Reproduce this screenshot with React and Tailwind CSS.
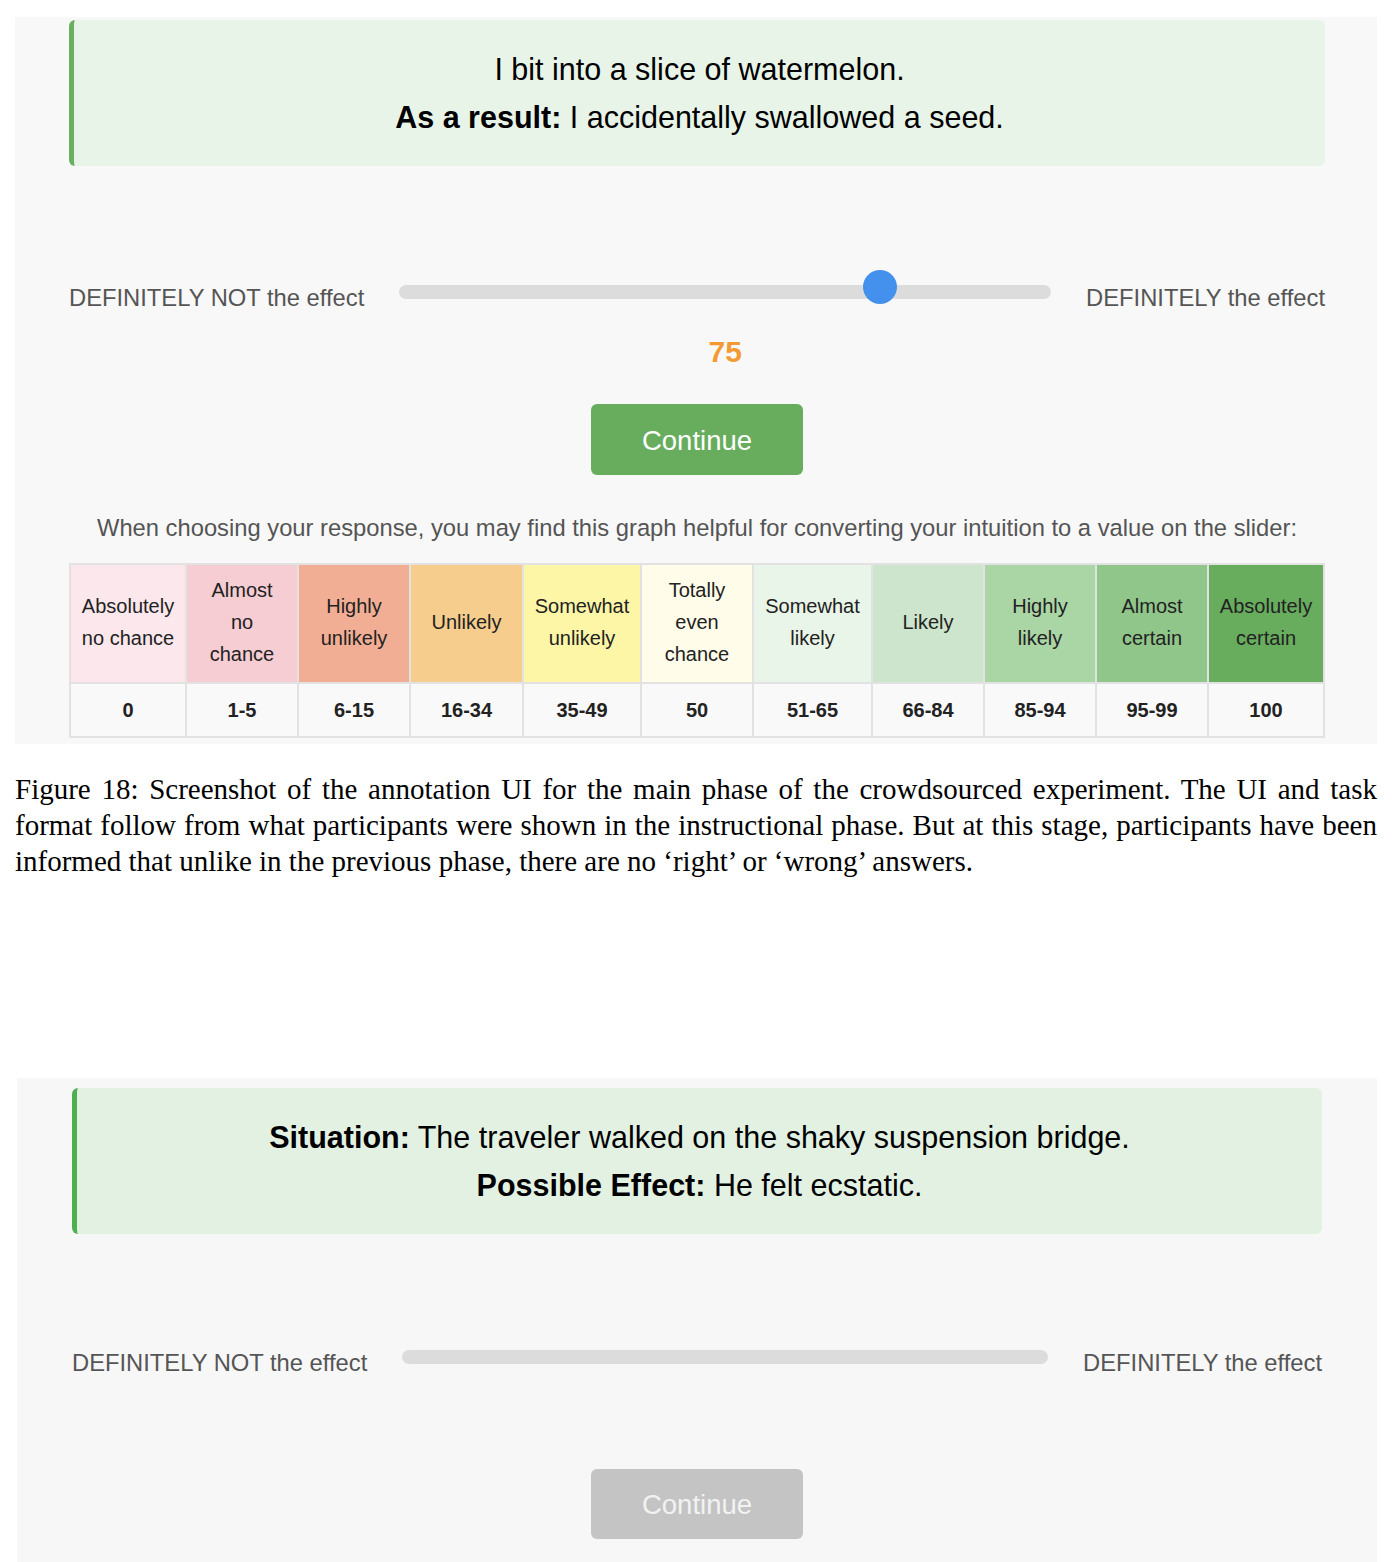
const scale = [
  { label: ['Absolutely', 'no chance'], range: '0', bg: 'bg-[#fce8ec]', w: 'w-[116px]' },
  { label: ['Almost', 'no', 'chance'], range: '1-5', bg: 'bg-[#f6cdd2]', w: 'w-[112px]' },
  { label: ['Highly', 'unlikely'], range: '6-15', bg: 'bg-[#f2ae95]', w: 'w-[112px]' },
  { label: ['Unlikely'], range: '16-34', bg: 'bg-[#f6cd8d]', w: 'w-[113px]' },
  { label: ['Somewhat', 'unlikely'], range: '35-49', bg: 'bg-[#fdf6a7]', w: 'w-[118px]' },
  { label: ['Totally', 'even', 'chance'], range: '50', bg: 'bg-[#fffce9]', w: 'w-[112px]' },
  { label: ['Somewhat', 'likely'], range: '51-65', bg: 'bg-[#e9f5e8]', w: 'w-[119px]' },
  { label: ['Likely'], range: '66-84', bg: 'bg-[#cde5cc]', w: 'w-[112px]' },
  { label: ['Highly', 'likely'], range: '85-94', bg: 'bg-[#aad5a5]', w: 'w-[112px]' },
  { label: ['Almost', 'certain'], range: '95-99', bg: 'bg-[#91c68a]', w: 'w-[112px]' },
  { label: ['Absolutely', 'certain'], range: '100', bg: 'bg-[#68ad5e]', w: 'w-[116px]' },
];

const caption = [
  'Figure 18: Screenshot of the annotation UI for the main phase of the crowdsourced experiment. The UI and task',
  'format follow from what participants were shown in the instructional phase. But at this stage, participants have been',
  'informed that unlike in the previous phase, there are no ‘right’ or ‘wrong’ answers.',
];

const sans = "font-['Liberation_Sans',Arial,Helvetica,sans-serif]";

function Prompt({ lines, tone }) {
  const box =
    tone === 'bright'
      ? 'bg-[#e3f1e3] border-[#4caf50]'
      : 'bg-[#e8f4e8] border-[#68af5f]';
  return (
    <div className={`${box} border-l-[5px] rounded-md h-[146px] flex flex-col justify-center items-center text-[30.5px] leading-[48px] text-black`}>
      {lines}
    </div>
  );
}

function Slider({ value }) {
  const pct = value ?? null;
  return (
    <div className="flex items-start gap-[35px]">
      <span className="mt-[14px] text-[23.75px] leading-[28px] text-[#555] whitespace-nowrap">DEFINITELY NOT the effect</span>
      <div className="flex-1 flex flex-col items-center">
        <div className="relative w-full h-[34px]">
          <div className="absolute left-0 right-0 top-[15px] h-[14px] rounded-full bg-[#dcdcdc]" />
          {pct !== null && (
            <div
              className="absolute top-0 w-[34px] h-[34px] rounded-full bg-[#4391ec]"
              style={{ left: `calc((100% - 34px) * ${pct / 100})` }}
            />
          )}
        </div>
        <div className={`mt-[30px] h-[36px] text-[30px] leading-[36px] font-bold text-[#f39a32] ${pct === null ? 'invisible' : ''}`}>
          {pct ?? 0}
        </div>
      </div>
      <span className="mt-[14px] text-[23.75px] leading-[28px] text-[#555] whitespace-nowrap">DEFINITELY the effect</span>
    </div>
  );
}

function ContinueButton({ disabled }) {
  return (
    <button
      disabled={disabled}
      className={`mx-auto block w-[212px] rounded-md text-[27.5px] leading-[32px] pt-[2px] ${
        disabled ? 'h-[70px] bg-[#c4c4c4] text-[#f2f2f2]' : 'h-[71px] bg-[#67ad5d] text-white'
      }`}
    >
      Continue
    </button>
  );
}

function ScaleTable() {
  return (
    <table className="w-[1254px] table-fixed border-collapse text-[20px] text-[#222]">
      <colgroup>
        {scale.map((s) => (
          <col key={s.range} className={s.w} />
        ))}
      </colgroup>
      <tbody>
        <tr className="h-[119px]">
          {scale.map((s) => (
            <td key={s.range} className={`${s.bg} border-2 border-[#e2e2e2] text-center align-middle leading-[32px] px-0 pb-[3px]`}>
              {s.label.map((l) => (
                <div key={l}>{l}</div>
              ))}
            </td>
          ))}
        </tr>
        <tr className="h-[54px]">
          {scale.map((s) => (
            <td key={s.range} className="bg-[#f9f9f9] border-2 border-[#e2e2e2] text-center font-bold pb-[1px]">
              {s.range}
            </td>
          ))}
        </tr>
      </tbody>
    </table>
  );
}

export default function App() {
  return (
    <div className={`bg-white w-[1392px] min-h-[1562px] pt-[17px] ${sans}`}>
      {/* rated item */}
      <section className="ml-[15px] w-[1362px] bg-[#f8f8f8] pt-[3px] pb-[6px] pl-[54px] pr-[52px]">
        <Prompt
          lines={
            <>
              <p>I bit into a slice of watermelon.</p>
              <p>
                <b>As a result:</b> I accidentally swallowed a seed.
              </p>
            </>
          }
        />
        <div className="mt-[104px]">
          <Slider value={75} />
        </div>
        <div className="mt-[34px]">
          <ContinueButton />
        </div>
        <p className="mt-[39px] text-center text-[23.75px] leading-[28px] text-[#555] whitespace-nowrap">
          When choosing your response, you may find this graph helpful for converting your intuition to a value on the slider:
        </p>
        <div className="mt-[21px] flex justify-start">
          <ScaleTable />
        </div>
      </section>

      {/* figure caption, set line by line as in the paper */}
      <div className="mx-[15px] mt-[27px] font-['Liberation_Serif','Times_New_Roman',serif] text-[29px] leading-[36px] text-black">
        {caption.map((line, i) => (
          <p
            key={i}
            className={`whitespace-nowrap ${i < caption.length - 1 ? 'text-justify [text-align-last:justify]' : ''}`}
          >
            {line}
          </p>
        ))}
      </div>

      {/* untouched item */}
      <section className="ml-[17px] mt-[199px] w-[1360px] bg-[#f7f7f7] pt-[10px] pb-[23px] pl-[55px] pr-[55px]">
        <Prompt
          tone="bright"
          lines={
            <>
              <p>
                <b>Situation:</b> The traveler walked on the shaky suspension bridge.
              </p>
              <p>
                <b>Possible Effect:</b> He felt ecstatic.
              </p>
            </>
          }
        />
        <div className="mt-[101px]">
          <Slider value={null} />
        </div>
        <div className="mt-[34px]">
          <ContinueButton disabled />
        </div>
      </section>
    </div>
  );
}
